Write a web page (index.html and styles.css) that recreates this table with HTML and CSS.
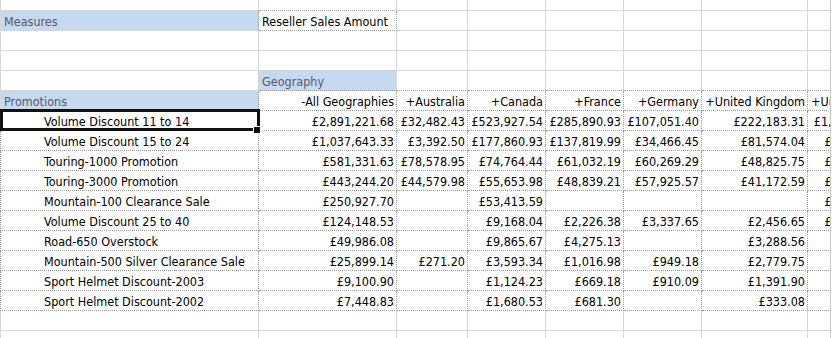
FILE: index.html
```html
<!DOCTYPE html>
<html>
<head>
<meta charset="utf-8">
<link rel="stylesheet" href="styles.css">
</head>
<body>
<div class="sheet">
  <div class="grid">
    <div class="row r0">
      <div class="c a"></div><div class="c db"></div><div class="c"></div><div class="c"></div><div class="c"></div><div class="c"></div><div class="c"></div><div class="c"></div>
    </div>
    <div class="row">
      <div class="c a hd dr">Measures</div><div class="c p">Reseller Sales Amount</div><div class="c"></div><div class="c"></div><div class="c"></div><div class="c"></div><div class="c"></div><div class="c"></div>
    </div>
    <div class="row">
      <div class="c a"></div><div class="c"></div><div class="c"></div><div class="c"></div><div class="c"></div><div class="c"></div><div class="c"></div><div class="c"></div>
    </div>
    <div class="row">
      <div class="c a"></div><div class="c"></div><div class="c"></div><div class="c"></div><div class="c"></div><div class="c"></div><div class="c"></div><div class="c"></div>
    </div>
    <div class="row">
      <div class="c a"></div><div class="c hd db">Geography</div><div class="c db"></div><div class="c db"></div><div class="c db"></div><div class="c db"></div><div class="c db"></div><div class="c db"></div>
    </div>
    <div class="row">
      <div class="c a hd dr">Promotions</div><div class="c p n">-All Geographies</div><div class="c p n">+Australia</div><div class="c p n">+Canada</div><div class="c p n">+France</div><div class="c p n">+Germany</div><div class="c p n">+United Kingdom</div><div class="c p n">+United States</div>
    </div>
    <div class="row">
      <div class="c a p ind sel">Volume Discount 11 to 14<span class="handle"></span></div><div class="c p n">£2,891,221.68</div><div class="c p n">£32,482.43</div><div class="c p n">£523,927.54</div><div class="c p n">£285,890.93</div><div class="c p n">£107,051.40</div><div class="c p n">£222,183.31</div><div class="c p n">£1,719,686.07</div>
    </div>
    <div class="row">
      <div class="c a p ind">Volume Discount 15 to 24</div><div class="c p n">£1,037,643.33</div><div class="c p n">£3,392.50</div><div class="c p n">£177,860.93</div><div class="c p n">£137,819.99</div><div class="c p n">£34,466.45</div><div class="c p n">£81,574.04</div><div class="c p n">£602,529.42</div>
    </div>
    <div class="row">
      <div class="c a p ind">Touring-1000 Promotion</div><div class="c p n">£581,331.63</div><div class="c p n">£78,578.95</div><div class="c p n">£74,764.44</div><div class="c p n">£61,032.19</div><div class="c p n">£60,269.29</div><div class="c p n">£48,825.75</div><div class="c p n">£257,861.01</div>
    </div>
    <div class="row">
      <div class="c a p ind">Touring-3000 Promotion</div><div class="c p n">£443,244.20</div><div class="c p n">£44,579.98</div><div class="c p n">£55,653.98</div><div class="c p n">£48,839.21</div><div class="c p n">£57,925.57</div><div class="c p n">£41,172.59</div><div class="c p n">£195,072.87</div>
    </div>
    <div class="row">
      <div class="c a p ind">Mountain-100 Clearance Sale</div><div class="c p n">£250,927.70</div><div class="c p n"></div><div class="c p n">£53,413.59</div><div class="c p n"></div><div class="c p n"></div><div class="c p n"></div><div class="c p n">£197,514.11</div>
    </div>
    <div class="row">
      <div class="c a p ind">Volume Discount 25 to 40</div><div class="c p n">£124,148.53</div><div class="c p n"></div><div class="c p n">£9,168.04</div><div class="c p n">£2,226.38</div><div class="c p n">£3,337.65</div><div class="c p n">£2,456.65</div><div class="c p n">£106,959.81</div>
    </div>
    <div class="row">
      <div class="c a p ind">Road-650 Overstock</div><div class="c p n">£49,986.08</div><div class="c p n"></div><div class="c p n">£9,865.67</div><div class="c p n">£4,275.13</div><div class="c p n"></div><div class="c p n">£3,288.56</div><div class="c p n">£32,556.72</div>
    </div>
    <div class="row">
      <div class="c a p ind">Mountain-500 Silver Clearance Sale</div><div class="c p n">£25,899.14</div><div class="c p n">£271.20</div><div class="c p n">£3,593.34</div><div class="c p n">£1,016.98</div><div class="c p n">£949.18</div><div class="c p n">£2,779.75</div><div class="c p n">£17,288.69</div>
    </div>
    <div class="row">
      <div class="c a p ind">Sport Helmet Discount-2003</div><div class="c p n">£9,100.90</div><div class="c p n"></div><div class="c p n">£1,124.23</div><div class="c p n">£669.18</div><div class="c p n">£910.09</div><div class="c p n">£1,391.90</div><div class="c p n">£5,005.50</div>
    </div>
    <div class="row">
      <div class="c a p ind">Sport Helmet Discount-2002</div><div class="c p n">£7,448.83</div><div class="c p n"></div><div class="c p n">£1,680.53</div><div class="c p n">£681.30</div><div class="c p n"></div><div class="c p n">£333.08</div><div class="c p n">£4,753.92</div>
    </div>
    <div class="row">
      <div class="c a"></div><div class="c"></div><div class="c"></div><div class="c"></div><div class="c"></div><div class="c"></div><div class="c"></div><div class="c"></div>
    </div>
    <div class="row">
      <div class="c a"></div><div class="c"></div><div class="c"></div><div class="c"></div><div class="c"></div><div class="c"></div><div class="c"></div><div class="c"></div>
    </div>
  </div>
</div>
</body>
</html>
```
FILE: styles.css
```css
html, body {
  margin: 0;
  padding: 0;
  background: #ffffff;
}

.sheet {
  width: 830px;
  height: 338px;
  overflow: hidden;
  border-right: 1px solid #c8c8c8;
  font-family: "DejaVu Sans Condensed", "DejaVu Sans", Verdana, sans-serif;
  font-stretch: condensed;
  font-size: 12.5px;
  color: #000000;
}

.grid {
  display: grid;
  grid-template-columns: 259px 138px 71px 78px 78px 78px 106px 91px;
  grid-template-rows: 11px;
  grid-auto-rows: 20px;
  width: 899px;
}

.row {
  display: contents;
}

.c {
  box-sizing: border-box;
  border-right: 1px solid #d6d6d6;
  border-bottom: 1px solid #d6d6d6;
  padding: 3px 2px 0 3px;
  line-height: 16px;
  white-space: nowrap;
  overflow: visible;
  position: relative;
}

.a {
  border-left: 1px solid #d6d6d6;
}

.p {
  border-right: 1px dotted #9a9a9a;
  border-bottom: 1px dotted #9a9a9a;
}

.a.p {
  border-left: 1px dotted #9a9a9a;
}

.db {
  border-bottom: 1px dotted #9a9a9a;
}

.dr {
  border-right: 1px dotted #9a9a9a;
}

.hd {
  background: #c5d9f1;
  color: #5a5a66;
}

.n {
  text-align: right;
}

.ind {
  padding-left: 43px;
}

.sel::after {
  content: "";
  position: absolute;
  top: -2px;
  left: -1px;
  right: -2px;
  bottom: -1px;
  border: 3px solid #111111;
  pointer-events: none;
}

.handle {
  position: absolute;
  right: -3px;
  bottom: -4px;
  width: 6px;
  height: 6px;
  background: #111111;
  border: 1px solid #ffffff;
  box-sizing: content-box;
  z-index: 2;
}
```
